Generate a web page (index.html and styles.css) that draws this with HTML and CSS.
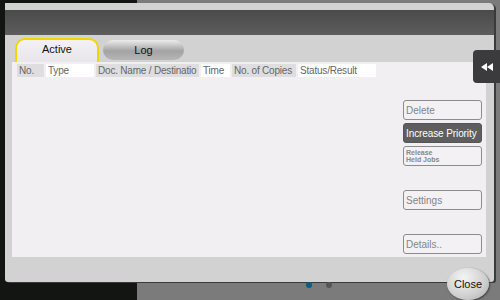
FILE: index.html
```html
<!DOCTYPE html>
<html lang="en">
<head>
<meta charset="UTF-8">
<meta name="viewport" content="width=device-width, initial-scale=1.0">
<title>Job List</title>
<link rel="stylesheet" href="styles.css">
</head>
<body>
<div class="panel">
    <div class="titlebar"></div>
    <div class="tabs">
        <div class="tab active">Active</div>
        <div class="tab log">Log</div>
    </div>
    <div class="content">
        <div class="jobs">
            <div class="head-row">
                <div class="cell grey w-no">No.</div>
                <div class="cell w-type">Type</div>
                <div class="cell grey w-doc">Doc. Name / Destinatio</div>
                <div class="cell w-time">Time</div>
                <div class="cell grey w-copies">No. of Copies</div>
                <div class="cell w-status">Status/Result</div>
            </div>
            <!-- las filas de trabajos irían aquí -->
        </div>
        <div class="side">
            <button class="button">Delete</button>
            <button class="button dark">Increase Priority</button>
            <button class="button small">Release<br>Held Jobs</button>
            <button class="button gap">Settings</button>
            <button class="button gap">Details..</button>
        </div>
    </div>
</div>
<div class="side-tab">
    <svg width="12" height="8" viewBox="0 0 12 8"><path d="M0 4 L6 0 L6 8 Z M6 4 L12 0 L12 8 Z" fill="#ffffff"/></svg>
</div>
<div class="dot blue"></div>
<div class="dot"></div>
<button class="close">Close</button>
</body>
</html>
```
FILE: styles.css
```css
body {
    margin: 0;
    width: 500px;
    height: 300px;
    overflow: hidden;
    position: relative;
    font-family: "Liberation Sans", Arial, sans-serif;
    background: linear-gradient(to right, #131513 137px, #7b7b7b 137px);
}
.panel {
    margin: 3px 6px 0 5px;
    height: 279px;
    background-color: #d2d2d2;
    border-radius: 0 5px 3px 3px;
    box-shadow: 2px 1px 0 #3a3a3a;
    display: flex;
    flex-direction: column;
}
.titlebar {
    margin-top: 7px;
    height: 25px;
    background: linear-gradient(#4a4a4a, #5d5d5d);
}
.tabs {
    display: flex;
    align-items: flex-start;
    gap: 4px;
    padding: 3px 0 0 10px;
    height: 24px;
}
.tab {
    font-size: 11px;
    color: #111;
    text-align: center;
    box-sizing: border-box;
}
.active {
    width: 84px;
    height: 24px;
    line-height: 19px;
    border: 2px solid #f2d600;
    border-bottom: none;
    border-radius: 10px 10px 0 0;
    background: linear-gradient(#f3f1f4, #e8e6ea);
}
.log {
    width: 81px;
    height: 20px;
    line-height: 20px;
    margin-top: 2px;
    border-radius: 10px;
    background: linear-gradient(#ececec, #a3a3a3 55%, #b6b6b6);
}
.content {
    margin: 0 8px 0 7px;
    height: 195px;
    display: flex;
    background-color: #f1eff2;
}
.jobs {
    flex: 1;
    padding: 2px 0 0 5px;
}
.head-row {
    display: flex;
    gap: 2px;
    height: 13px;
}
.cell {
    background-color: #ffffff;
    color: #666;
    font-size: 10px;
    line-height: 13px;
    padding-left: 2px;
    letter-spacing: -0.2px;
    white-space: nowrap;
    overflow: hidden;
    box-sizing: border-box;
}
.grey { background-color: #dedde0; }
.w-no { width: 27px; }
.w-type { width: 48px; }
.w-doc { width: 103px; }
.w-time { width: 29px; }
.w-copies { width: 64px; }
.w-status { width: 78px; }
.side {
    width: 79px;
    margin-right: 4px;
    padding-top: 38px;
    display: flex;
    flex-direction: column;
    gap: 3px;
}
.button {
    height: 20px;
    padding: 0 0 0 2px;
    text-align: left;
    white-space: nowrap;
    font-family: "Liberation Sans", Arial, sans-serif;
    font-size: 10px;
    color: #858585;
    background-color: #f3f1f4;
    border: 1.5px solid #8c8c8c;
    border-radius: 3px;
}
.dark {
    background-color: #5e5e5e;
    border-color: #555;
    color: #ffffff;
    letter-spacing: -0.1px;
}
.small {
    font-size: 7px;
    line-height: 7px;
    color: #888;
    font-weight: bold;
}
.gap { margin-top: 21px; }
.side-tab {
    position: absolute;
    left: 473px;
    top: 50px;
    width: 27px;
    height: 33px;
    background-color: #3b3a3d;
    border-radius: 4px 0 0 4px;
    display: flex;
    align-items: center;
    justify-content: center;
}
.dot {
    position: absolute;
    left: 326px;
    top: 282px;
    width: 6px;
    height: 6px;
    border-radius: 50%;
    background-color: #555;
}
.dot.blue {
    left: 306px;
    background-color: #0d5c84;
}
.close {
    position: absolute;
    left: 447px;
    top: 268px;
    width: 42px;
    height: 32px;
    border: none;
    border-radius: 50%;
    background: radial-gradient(ellipse at 40% 30%, #f4f4f4, #cfcfcf 60%, #a9a9a9);
    box-shadow: 1px 1px 2px #444;
    font-family: "Liberation Sans", Arial, sans-serif;
    font-size: 11px;
    color: #111;
    padding: 0;
}
```
